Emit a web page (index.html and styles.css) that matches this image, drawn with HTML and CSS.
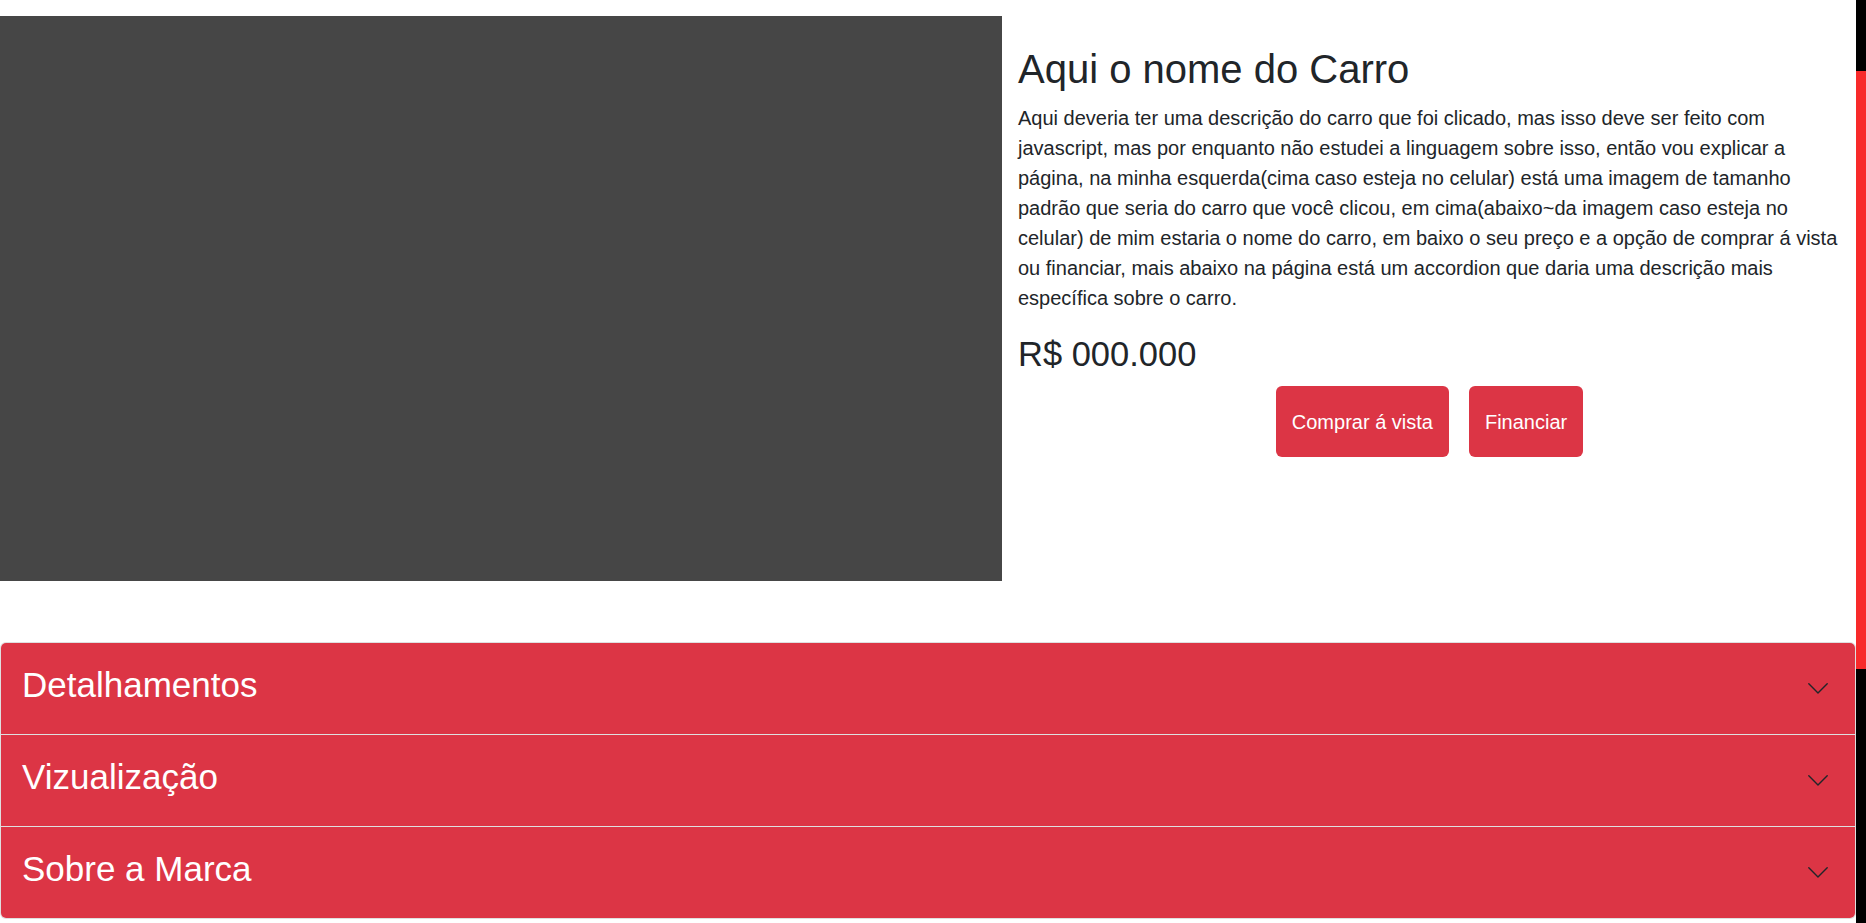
FILE: index.html
```html
<!DOCTYPE html>
<html lang="pt-BR">
<head>
<meta charset="utf-8">
<title>Carro</title>
<link rel="stylesheet" href="styles.css">
</head>
<body>
<main class="page">
  <section class="produto">
    <div class="foto" role="img" aria-label="Imagem do carro"></div>
    <div class="info">
      <h1 class="nome">Aqui o nome do Carro</h1>
      <p class="descricao">Aqui deveria ter uma descrição do carro que foi clicado, mas isso deve ser feito com javascript, mas por enquanto não estudei a linguagem sobre isso, então vou explicar a página, na minha esquerda(cima caso esteja no celular) está uma imagem de tamanho padrão que seria do carro que você clicou, em cima(abaixo~da imagem caso esteja no celular) de mim estaria o nome do carro, em baixo o seu preço e a opção de comprar á vista ou financiar, mais abaixo na página está um accordion que daria uma descrição mais específica sobre o carro.</p>
      <h2 class="preco">R$ 000.000</h2>
      <div class="acoes">
        <button class="btn" type="button">Comprar á vista</button>
        <button class="btn" type="button">Financiar</button>
      </div>
    </div>
  </section>

  <section class="accordion">
    <div class="acc-item">
      <button class="acc-btn" type="button">
        <span class="acc-title">Detalhamentos</span>
        <svg class="chev" width="20" height="11" viewBox="0 0 20 11"><polyline points="0.8,0.8 10,10 19.2,0.8" fill="none" stroke="#212529" stroke-width="1.4" stroke-linecap="round" stroke-linejoin="round"/></svg>
      </button>
    </div>
    <div class="acc-item">
      <button class="acc-btn" type="button">
        <span class="acc-title">Vizualização</span>
        <svg class="chev" width="20" height="11" viewBox="0 0 20 11"><polyline points="0.8,0.8 10,10 19.2,0.8" fill="none" stroke="#212529" stroke-width="1.4" stroke-linecap="round" stroke-linejoin="round"/></svg>
      </button>
    </div>
    <div class="acc-item">
      <button class="acc-btn" type="button">
        <span class="acc-title">Sobre a Marca</span>
        <svg class="chev" width="20" height="11" viewBox="0 0 20 11"><polyline points="0.8,0.8 10,10 19.2,0.8" fill="none" stroke="#212529" stroke-width="1.4" stroke-linecap="round" stroke-linejoin="round"/></svg>
      </button>
    </div>
  </section>
</main>
<div class="scrollbar" aria-hidden="true"><div class="scroll-thumb"></div></div>
</body>
</html>
```

FILE: styles.css
```css
html,
body {
  height: 100%;
  overflow: hidden;
}

body {
  margin: 0;
  display: flex;
  font-family: "Liberation Sans", Arial, sans-serif;
  color: #212529;
  background: #fff;
}

.page {
  flex: 1;
  min-width: 0;
  display: flex;
  flex-direction: column;
}

.scrollbar {
  flex: none;
  width: 10px;
  height: 100%;
  background: #000;
  padding-top: 71px;
  box-sizing: border-box;
}

.scroll-thumb {
  height: 598px;
  background: #f82a2a;
}

.produto {
  display: flex;
  padding-top: 16px;
}

.foto {
  width: 1002px;
  height: 565px;
  flex: none;
  background: #464646;
}

.info {
  flex: 1;
  padding: 29px 15px 0 16px;
}

.nome {
  margin: 0 0 10px;
  font-size: 40px;
  font-weight: 400;
  line-height: 1.2;
}

.descricao {
  margin: 0 0 21px;
  font-size: 20px;
  line-height: 30px;
}

.preco {
  margin: 0 0 11px;
  font-size: 34.5px;
  font-weight: 400;
  line-height: 1.2;
}

.acoes {
  display: flex;
  justify-content: center;
  gap: 20px;
}

.btn {
  font-family: inherit;
  font-size: 20px;
  line-height: 30px;
  color: #fff;
  background: #dc3545;
  border: 0;
  border-radius: 6px;
  padding: 20.5px 16px;
}

.accordion {
  margin-top: 61px;
  display: flex;
  flex-direction: column;
}

.acc-item {
  background: #fff;
  border: 1px solid rgba(0, 0, 0, 0.125);
}
.acc-item + .acc-item {
  border-top: 0;
}
.acc-item:first-child {
  border-radius: 6px 6px 0 0;
}
.acc-item:last-child {
  border-radius: 0 0 6px 6px;
}
.acc-item:first-child .acc-btn {
  border-radius: 5px 5px 0 0;
}
.acc-item:last-child .acc-btn {
  border-radius: 0 0 5px 5px;
}

.acc-btn {
  width: 100%;
  height: 91px;
  display: flex;
  align-items: center;
  justify-content: space-between;
  background: #dc3545;
  color: #fff;
  border: 0;
  padding: 0 27px 0 21px;
  font-family: inherit;
  text-align: left;
}

.acc-title {
  font-size: 35px;
  line-height: 42px;
  margin-top: -8px;
}

.chev {
  flex: none;
}
```
